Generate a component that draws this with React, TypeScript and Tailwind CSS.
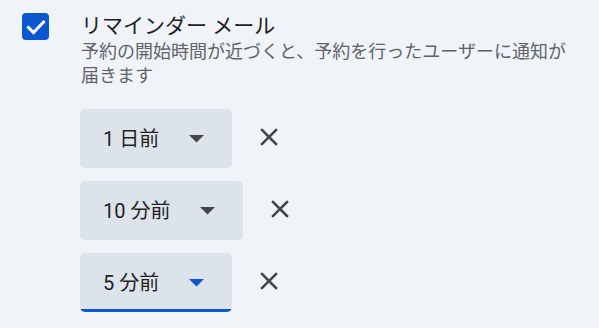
import React from "react";

const reminders = [
  { label: "1 日前", active: false },
  { label: "10 分前", active: false },
  { label: "5 分前", active: true },
];

function CloseIcon() {
  return (
    <svg width="18" height="18" viewBox="0 0 18 18" fill="none">
      <path d="M2 2L16 16M16 2L2 16" stroke="#444746" strokeWidth="2.5" strokeLinecap="square" />
    </svg>
  );
}

export default function App() {
  return (
    <div
      className="min-h-screen w-[599px] bg-[#f0f4f9] text-[#1f1f1f]"
      style={{ fontFamily: "Roboto, 'Noto Sans CJK JP', sans-serif" }}
    >
      <div className="flex pl-[22px] pt-[13px]">
        {/* Checkbox */}
        <div className="flex h-[27px] w-[27px] shrink-0 items-center justify-center rounded-[4px] bg-[#0b57d0]">
          <svg width="24" height="24" viewBox="0 0 24 24" fill="none">
            <path d="M4.5 12.5L9.5 17.5L19.5 7" stroke="white" strokeWidth="3" strokeLinecap="square" />
          </svg>
        </div>

        <div className="ml-[32px] flex flex-col">
          <div className="-mt-[1px] text-[21px] leading-[28px]">リマインダー メール</div>
          <p className="w-[500px] text-[18px] leading-[24px] text-[#5f6368]">
            予約の開始時間が近づくと、予約を行ったユーザーに通知が届きます
          </p>

          {/* Reminder selects */}
          <div className="-ml-[1px] mt-[21px] flex flex-col gap-[13px]">
            {reminders.map((r) => (
              <div key={r.label} className="flex items-center">
                <div className="relative flex h-[59px] items-center overflow-hidden rounded-[5px] bg-[#dde3ea] pl-[23px] pr-[28px]">
                  <span className="text-[20px] leading-none text-[#1f1f1f]">{r.label}</span>
                  <svg className="ml-[30px]" width="15" height="8" viewBox="0 0 15 8">
                    <path d="M0 0H15L7.5 7.5Z" fill={r.active ? "#0b57d0" : "#444746"} />
                  </svg>
                  {r.active && <div className="absolute bottom-0 left-0 right-0 h-[3px] bg-[#0b57d0]" />}
                </div>
                <button className="mb-[4px] ml-[28px] flex items-center justify-center">
                  <CloseIcon />
                </button>
              </div>
            ))}
          </div>
        </div>
      </div>
    </div>
  );
}
